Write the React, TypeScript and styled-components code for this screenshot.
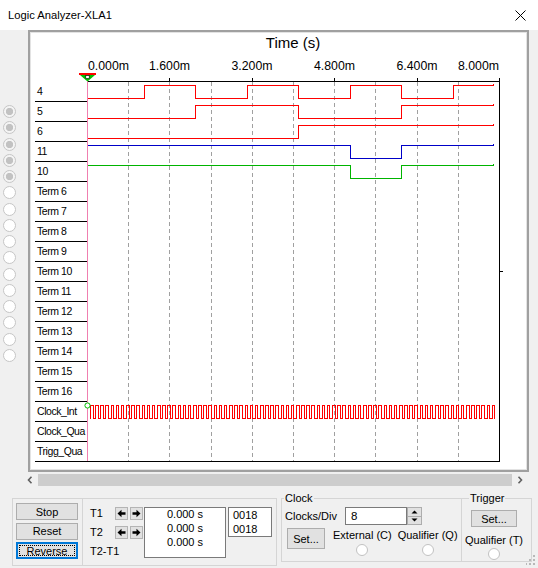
import React from "react";
import styled, { createGlobalStyle } from "styled-components";

const GlobalStyle = createGlobalStyle`
  html, body { margin: 0; padding: 0; background: #f0f0f0; overflow: hidden; }
  body { font-family: "Liberation Sans", Arial, sans-serif; font-size: 11px; color: #000; }
  * { box-sizing: border-box; }
`;

const Window = styled.div`
  position: relative;
  width: 538px;
  height: 568px;
  background: #f0f0f0;
  display: flex;
  flex-direction: column;
  overflow: hidden;
`;

const TitleBar = styled.div`
  flex: none;
  height: 30px;
  background: #fff;
  display: flex;
  align-items: center;
  justify-content: space-between;
  padding-left: 8px;
`;

const Title = styled.span`
  font-size: 11.2px;
  color: #000;
`;

const CloseButton = styled.div`
  width: 36px;
  height: 30px;
  display: flex;
  align-items: center;
  justify-content: center;
`;

const Main = styled.div`
  flex: none;
  display: flex;
  height: 442px;
`;

const RadioColumn = styled.div`
  width: 28px;
  padding: 75px 0 0 3px;
  display: flex;
  flex-direction: column;
  gap: 3.25px;
`;

const SideRadio = styled.span<{ $on?: boolean }>`
  display: block;
  width: 13px;
  height: 13px;
  border-radius: 50%;
  border: 1px solid #c6c6c6;
  background: ${(p) =>
    p.$on ? "radial-gradient(circle, #c2c2c2 0 3.4px, #f4f4f4 3.9px)" : "#fff"};
`;

const Frame = styled.div`
  width: 501px;
  height: 442px;
  border: 2px solid #a0a0a0;
  box-shadow: inset 0 0 0 1px #e3e3e3;
  background: #fff;
  padding: 2px 0 0 5px;
`;

const PlotInner = styled.div`
  display: flex;
  align-items: flex-start;
`;

const LabelColumn = styled.div`
  flex: none;
  width: 52px;
  margin-top: 48px;
  display: flex;
  flex-direction: column;
`;

const LabelRow = styled.div`
  height: 20px;
  border-bottom: 1px solid #000;
  padding-left: 2px;
  line-height: 19px;
  font-size: 10.5px;
  letter-spacing: -0.45px;
  white-space: nowrap;
  color: #000;
`;

const ChartColumn = styled.div`
  flex: none;
  width: 420px;
`;

const ChartTitle = styled.div`
  width: 412px;
  height: 18px;
  line-height: 18px;
  text-align: center;
  font-size: 15px;
  color: #000;
`;

const ChartSvg = styled.svg`
  display: block;
  overflow: visible;
  font-family: "Liberation Sans", Arial, sans-serif;
`;

const Scrollbar = styled.div`
  flex: none;
  margin-left: 22px;
  width: 506px;
  height: 15px;
  display: flex;
  align-items: stretch;
`;

const ScrollArrow = styled.div`
  width: 16px;
  display: flex;
  align-items: center;
  justify-content: center;
`;

const ScrollTrack = styled.div`
  flex: 1;
  margin: 2px 0 1px;
  background: #cdcdcd;
`;

const BottomPanel = styled.div`
  flex: none;
  margin-top: 4px;
  padding-left: 12px;
  display: flex;
  align-items: flex-start;
`;

const ControlBox = styled.div`
  margin-top: 7px;
  width: 265px;
  height: 68px;
  border: 1px solid #d5d5d5;
  display: flex;
`;

const ButtonCol = styled.div`
  width: 70px;
  border-right: 1px solid #d5d5d5;
  padding: 4px 0 0 3px;
  display: flex;
  flex-direction: column;
  gap: 2.5px;
`;

const PushButton = styled.div<{ $w: number; $h: number; $focus?: boolean }>`
  width: ${(p) => p.$w}px;
  height: ${(p) => p.$h}px;
  flex: none;
  background: #e1e1e1;
  border: 1px solid ${(p) => (p.$focus ? "#0078d7" : "#adadad")};
  box-shadow: ${(p) => (p.$focus ? "inset 0 0 0 1px #0078d7" : "none")};
  outline: ${(p) => (p.$focus ? "1px dotted #000" : "none")};
  outline-offset: -4px;
  display: flex;
  align-items: center;
  justify-content: center;
  font-size: 11px;
  color: #000;
  white-space: nowrap;
`;

const TPanel = styled.div`
  display: flex;
  align-items: flex-start;
`;

const TGrid = styled.div`
  display: grid;
  grid-template-columns: 23px 13px 13px;
  column-gap: 2px;
  grid-auto-rows: 19px;
  align-items: center;
  padding: 4.5px 0 0 7px;
`;

const TLabel = styled.span<{ $span?: boolean }>`
  grid-column: ${(p) => (p.$span ? "1 / -1" : "auto")};
  font-size: 11px;
  white-space: nowrap;
`;

const ArrowButton = styled.div`
  width: 13px;
  height: 13px;
  background: #e1e1e1;
  border: 1px solid #b4b4b4;
  display: flex;
  align-items: center;
  justify-content: center;
`;

const ReadoutBox = styled.div<{ $w: number; $h: number; $align: string }>`
  margin-top: 8px;
  width: ${(p) => p.$w}px;
  height: ${(p) => p.$h}px;
  background: #fff;
  border: 1px solid #7a7a7a;
  text-align: ${(p) => p.$align};
  padding-left: ${(p) => (p.$align === "left" ? 4 : 0)}px;
  font-size: 11px;
  line-height: 13.8px;
`;

const TimeBox = styled(ReadoutBox)`
  margin-left: 1px;
`;

const HexBox = styled(ReadoutBox)`
  margin-left: 2px;
  line-height: 14px;
`;

const GroupBox = styled.fieldset<{ $w: number; $ml: number }>`
  margin: 0 0 0 ${(p) => p.$ml}px;
  width: ${(p) => p.$w}px;
  height: 71px;
  border: 1px solid #d5d5d5;
  padding: 0;
  min-width: 0;
`;

const GroupTitle = styled.legend<{ $offset: number }>`
  margin-left: ${(p) => p.$offset}px;
  padding: 0 1px;
  font-size: 11px;
  line-height: 14px;
`;

const ClockRow = styled.div`
  margin-top: 2px;
  padding-left: 3px;
  height: 18px;
  display: flex;
  align-items: center;
`;

const FieldLabel = styled.span`
  width: 60px;
  white-space: nowrap;
`;

const NumberField = styled.input`
  width: 62px;
  height: 18px;
  border: 1px solid #7a7a7a;
  background: #fff;
  padding: 0 0 0 5px;
  margin: 0;
  font-family: "Liberation Sans", Arial, sans-serif;
  font-size: 11.5px;
  color: #000;
  outline: none;
`;

const Spinner = styled.div`
  width: 15px;
  height: 18px;
  display: flex;
  flex-direction: column;
`;

const SpinHalf = styled.div`
  flex: 1;
  background: #e1e1e1;
  border: 1px solid #adadad;
  display: flex;
  align-items: center;
  justify-content: center;
  & + & { border-top: none; }
`;

const ClockRow2 = styled.div`
  margin-top: 3px;
  padding-left: 5px;
  display: flex;
  align-items: flex-start;
`;

const OptionCol = styled.div<{ $ml: number }>`
  margin-left: ${(p) => p.$ml}px;
  display: flex;
  flex-direction: column;
  align-items: center;
  line-height: 14px;
  white-space: nowrap;
`;

const OptionRadio = styled.span<{ $mt: number }>`
  display: block;
  margin-top: ${(p) => p.$mt}px;
  width: 12px;
  height: 12px;
  border-radius: 50%;
  border: 1px solid #c2c2c2;
  background: #fff;
`;

const TriggerBody = styled.div`
  display: flex;
  flex-direction: column;
  align-items: center;
  padding-right: 5px;
`;

const TriggerButtonSlot = styled.div`
  margin-top: 5px;
  margin-bottom: 6px;
`;

const OptionText = styled.span`
  line-height: 14px;
  white-space: nowrap;
`;

const Grip = styled.svg`
  position: absolute;
  right: 2px;
  bottom: 2px;
`;

const labels = [
  "4", "5", "6", "11", "10",
  "Term 6", "Term 7", "Term 8", "Term 9", "Term 10", "Term 11",
  "Term 12", "Term 13", "Term 14", "Term 15", "Term 16",
  "Clock_Int", "Clock_Qua", "Trigg_Qua",
];

const gridX = [128.5, 169.5, 211.5, 252.5, 293.5, 334.5, 375.5, 417.5, 458.5];
const majorTicks = [169.5, 252.5, 334.5, 417.5];

const tickLabels: { x: number; t: string; a: "start" | "middle" | "end" }[] = [
  { x: 88, t: "0.000m", a: "start" },
  { x: 169.5, t: "1.600m", a: "middle" },
  { x: 252, t: "3.200m", a: "middle" },
  { x: 334.5, t: "4.800m", a: "middle" },
  { x: 417, t: "6.400m", a: "middle" },
  { x: 499, t: "8.000m", a: "end" },
];

const signals = [
  { row: 0, color: "#ff0000", high: false, edges: [144.5, 195.5, 247.5, 298.5, 350.5, 401.5, 453.5] },
  { row: 1, color: "#ff0000", high: false, edges: [195.5, 298.5, 401.5] },
  { row: 2, color: "#ff0000", high: false, edges: [298.5] },
  { row: 3, color: "#0000c8", high: true, edges: [350.5, 401.5] },
  { row: 4, color: "#00b400", high: true, edges: [350.5, 401.5] },
];

function signalPath(row: number, startHigh: boolean, edges: number[]) {
  const top = 81 + row * 20;
  const hi = top + 4.5;
  const lo = top + 17.5;
  let level = startHigh;
  let d = `M87.5,${level ? hi : lo}`;
  for (const e of edges) {
    level = !level;
    d += ` H${e} V${level ? hi : lo}`;
  }
  const y = level ? hi : lo;
  d += ` H493.5 V${y - 2}`;
  return d;
}

function clockPath() {
  const hi = 405.5;
  const lo = 418.5;
  const period = 41.2 / 8;
  let d = `M90.5,${lo}`;
  for (let i = 0; ; i++) {
    const rise = Math.round(90 + i * period) + 0.5;
    const fall = Math.round(90 + i * period + period / 2) + 0.5;
    if (rise > 494.5) break;
    d += ` H${rise} V${hi}`;
    if (fall > 494.5) break;
    d += ` H${fall} V${lo}`;
  }
  return d;
}

const LeftArrowIcon = () => (
  <svg width="9" height="9" viewBox="0 0 9 9">
    <path d="M0.5 4.5 L4.5 0.8 L4.5 3.2 L8.5 3.2 L8.5 5.8 L4.5 5.8 L4.5 8.2 Z" fill="#000" />
  </svg>
);

const RightArrowIcon = () => (
  <svg width="9" height="9" viewBox="0 0 9 9">
    <path d="M8.5 4.5 L4.5 0.8 L4.5 3.2 L0.5 3.2 L0.5 5.8 L4.5 5.8 L4.5 8.2 Z" fill="#000" />
  </svg>
);

const Chevron = ({ dir }: { dir: "left" | "right" }) => (
  <svg width="6" height="8" viewBox="0 0 6 8">
    <path
      d={dir === "left" ? "M4.5 0.8 L1.5 4 L4.5 7.2" : "M1.5 0.8 L4.5 4 L1.5 7.2"}
      fill="none"
      stroke="#606060"
      strokeWidth="1.6"
    />
  </svg>
);

const SpinTriangle = ({ up }: { up: boolean }) => (
  <svg width="7" height="4" viewBox="0 0 7 4">
    <path d={up ? "M0.5 3.5 L3.5 0.5 L6.5 3.5 Z" : "M0.5 0.5 L3.5 3.5 L6.5 0.5 Z"} fill="#000" />
  </svg>
);

export default function App() {
  return (
    <>
      <GlobalStyle />
      <Window>
        <TitleBar>
          <Title>Logic Analyzer-XLA1</Title>
          <CloseButton>
            <svg width="11" height="11" viewBox="0 0 11 11">
              <path d="M0.5 0.5 L10.5 10.5 M10.5 0.5 L0.5 10.5" stroke="#000" strokeWidth="1" />
            </svg>
          </CloseButton>
        </TitleBar>

        <Main>
          <RadioColumn>
            {Array.from({ length: 16 }).map((_, i) => (
              <SideRadio key={i} $on={i < 5} />
            ))}
          </RadioColumn>
          <Frame>
            <PlotInner>
              <LabelColumn>
                {labels.map((l) => (
                  <LabelRow key={l}>{l}</LabelRow>
                ))}
              </LabelColumn>
              <ChartColumn>
                <ChartTitle>Time (s)</ChartTitle>
                <ChartSvg width={420} height={413} viewBox="87 52 420 413" shapeRendering="crispEdges">
                  {tickLabels.map((t) => (
                    <text
                      key={t.t}
                      x={t.x}
                      y={69.5}
                      fontSize={12.3}
                      textAnchor={t.a}
                      fill="#000"
                      shapeRendering="auto"
                    >
                      {t.t}
                    </text>
                  ))}
                  {gridX.map((x) => (
                    <line
                      key={x}
                      x1={x}
                      x2={x}
                      y1={82}
                      y2={461}
                      stroke="#a0a0a0"
                      strokeDasharray="4 3"
                    />
                  ))}
                  {majorTicks.map((x) => (
                    <line key={"t" + x} x1={x} x2={x} y1={78} y2={82} stroke="#000" />
                  ))}
                  <line x1={87} x2={500} y1={81.5} y2={81.5} stroke="#000" />
                  <line x1={87} x2={500} y1={461.5} y2={461.5} stroke="#000" />
                  <line x1={499.5} x2={499.5} y1={78} y2={462} stroke="#000" />
                  <line x1={499} x2={503} y1={271.5} y2={271.5} stroke="#000" />
                  {signals.map((s) => (
                    <path
                      key={s.row}
                      d={signalPath(s.row, s.high, s.edges)}
                      fill="none"
                      stroke={s.color}
                      strokeWidth={1}
                    />
                  ))}
                  <path d={clockPath()} fill="none" stroke="#ff0000" strokeWidth={1} />
                  <line x1={87.5} x2={87.5} y1={76} y2={461} stroke="#f07fb0" />
                  <circle cx={87.5} cy={405.5} r={2.6} fill="#fff" stroke="#00c000" strokeWidth={1} shapeRendering="auto" />
                  <g shapeRendering="auto">
                    <rect x={79} y={73} width={17} height={2} fill="#ff0000" />
                    <polygon points="80,75 95,75 87.5,81.5" fill="#00c000" />
                    <rect x={85.8} y={75.6} width={3.4} height={3} fill="#fff" stroke="#000" strokeWidth={0.6} />
                  </g>
                </ChartSvg>
              </ChartColumn>
            </PlotInner>
          </Frame>
        </Main>

        <Scrollbar>
          <ScrollArrow>
            <Chevron dir="left" />
          </ScrollArrow>
          <ScrollTrack />
          <ScrollArrow>
            <Chevron dir="right" />
          </ScrollArrow>
        </Scrollbar>

        <BottomPanel>
          <ControlBox>
            <ButtonCol>
              <PushButton $w={62} $h={17}>Stop</PushButton>
              <PushButton $w={62} $h={17}>Reset</PushButton>
              <PushButton $w={62} $h={17} $focus>Reverse</PushButton>
            </ButtonCol>
            <TPanel>
              <TGrid>
                <TLabel>T1</TLabel>
                <ArrowButton><LeftArrowIcon /></ArrowButton>
                <ArrowButton><RightArrowIcon /></ArrowButton>
                <TLabel>T2</TLabel>
                <ArrowButton><LeftArrowIcon /></ArrowButton>
                <ArrowButton><RightArrowIcon /></ArrowButton>
                <TLabel $span>T2-T1</TLabel>
              </TGrid>
              <TimeBox $w={82} $h={51} $align="center">
                <div>0.000 s</div>
                <div>0.000 s</div>
                <div>0.000 s</div>
              </TimeBox>
              <HexBox $w={44} $h={30} $align="left">
                <div>0018</div>
                <div>0018</div>
              </HexBox>
            </TPanel>
          </ControlBox>

          <GroupBox $w={181} $ml={4}>
            <GroupTitle $offset={2}>Clock</GroupTitle>
            <ClockRow>
              <FieldLabel>Clocks/Div</FieldLabel>
              <NumberField readOnly value="8" />
              <Spinner>
                <SpinHalf><SpinTriangle up /></SpinHalf>
                <SpinHalf><SpinTriangle up={false} /></SpinHalf>
              </Spinner>
            </ClockRow>
            <ClockRow2>
              <PushButton $w={38} $h={21}>Set...</PushButton>
              <OptionCol $ml={8}>
                <span>External (C)</span>
                <OptionRadio $mt={2} />
              </OptionCol>
              <OptionCol $ml={6}>
                <span>Qualifier (Q)</span>
                <OptionRadio $mt={2} />
              </OptionCol>
            </ClockRow2>
          </GroupBox>

          <GroupBox $w={71} $ml={-1}>
            <GroupTitle $offset={7}>Trigger</GroupTitle>
            <TriggerBody>
              <TriggerButtonSlot>
                <PushButton $w={46} $h={17}>Set...</PushButton>
              </TriggerButtonSlot>
              <OptionText>Qualifier (T)</OptionText>
              <OptionRadio $mt={1} />
            </TriggerBody>
          </GroupBox>
        </BottomPanel>

        <Grip width="10" height="12" viewBox="0 0 10 12">
          <g fill="#b8b8b8">
            <rect x="7" y="1" width="2" height="2" />
            <rect x="7" y="5" width="2" height="2" />
            <rect x="3" y="5" width="2" height="2" />
            <rect x="7" y="9" width="2" height="2" />
            <rect x="3" y="9" width="2" height="2" />
            <rect x="-1" y="9" width="2" height="2" />
          </g>
        </Grip>
      </Window>
    </>
  );
}
